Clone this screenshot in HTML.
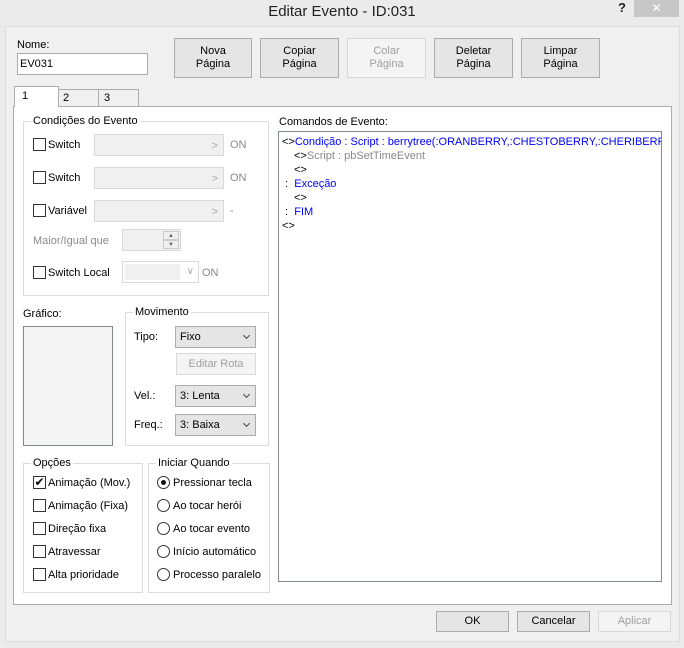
<!DOCTYPE html>
<html><head><meta charset="utf-8"><style>
*{box-sizing:border-box;margin:0;padding:0}
body{width:684px;height:648px;background:#ebebeb;font-family:"Liberation Sans",sans-serif;font-size:11px;line-height:16px;color:#000;position:relative;overflow:hidden}
.a{position:absolute;white-space:nowrap}
.btn{position:absolute;background:#e5e5e5;border:1px solid #acacac;text-align:center;font-size:11px;line-height:13px;display:flex;align-items:center;justify-content:center}
.dis{background:#f4f4f4;border-color:#d9d9d9;color:#a0a0a0}
.grp{position:absolute;border:1px solid #dcdcdc}
.gl{position:absolute;top:-8px;left:7px;background:#fff;padding:0 2px;line-height:14px}
.cb{position:absolute;width:13px;height:13px;border:1px solid #333;background:#fff}
.rd{position:absolute;width:13px;height:13px;border:1px solid #333;border-radius:50%;background:#fff}
.fld{position:absolute;background:#f0f0f0;border:1px solid #d9d9d9}
.cmb{position:absolute;background:#e5e5e5;border:1px solid #acacac;padding-left:4px;line-height:21px}
.cmb:after{content:"";position:absolute;right:6px;top:6px;width:4px;height:4px;border-right:1.5px solid #444;border-bottom:1.5px solid #444;transform:rotate(45deg)}
.gray{color:#8a8a8a}
</style></head><body>
<div class="a" style="left:0;top:4px;width:684px;text-align:center;font-size:15px;color:#222">Editar Evento - ID:031</div>
<div class="a" style="left:618px;top:0px;font-size:13px;font-weight:bold;color:#222">?</div>
<div class="a" style="left:634px;top:0;width:45px;height:17px;background:#c7c7c7;color:#fff;text-align:center;font-size:12px;line-height:17px">✕</div>
<div class="a" style="left:5px;top:26px;width:675px;height:616px;background:#f0f0f0;border:1px solid #dcdcdc"></div>
<div class="a" style="left:17px;top:37px">Nome:</div>
<div class="a" style="left:17px;top:53px;width:131px;height:22px;background:#fff;border:1px solid #acacac;padding:3px 2px;line-height:15px">EV031</div>
<div class="btn" style="left:174px;top:38px;width:78px;height:40px">Nova<br>Página</div>
<div class="btn" style="left:260px;top:38px;width:79px;height:40px">Copiar<br>Página</div>
<div class="btn dis" style="left:347px;top:38px;width:79px;height:40px">Colar<br>Página</div>
<div class="btn" style="left:434px;top:38px;width:79px;height:40px">Deletar<br>Página</div>
<div class="btn" style="left:521px;top:38px;width:79px;height:40px">Limpar<br>Página</div>
<div class="a" style="left:13px;top:106px;width:659px;height:499px;background:#fff;border:1px solid #acacac"></div>
<div class="a" style="left:58px;top:89px;width:41px;height:18px;background:#f0f0f0;border:1px solid #acacac;padding-left:4px;line-height:17px">2</div>
<div class="a" style="left:98px;top:89px;width:41px;height:18px;background:#f0f0f0;border:1px solid #acacac;padding-left:5px;line-height:17px">3</div>
<div class="a" style="left:14px;top:86px;width:45px;height:21px;background:#fff;border:1px solid #acacac;border-bottom:none;padding-left:7px;line-height:18px">1</div>

<div class="grp" style="left:23px;top:121px;width:246px;height:175px"><div class="gl">Condições do Evento</div></div>
<div class="cb" style="left:33px;top:138px"></div><div class="a" style="left:48px;top:137px">Switch</div>
<div class="fld" style="left:94px;top:134px;width:130px;height:22px"><span class="a" style="right:5px;top:3px;color:#aaa">&gt;</span></div><div class="a gray" style="left:230px;top:137px">ON</div>
<div class="cb" style="left:33px;top:171px"></div><div class="a" style="left:48px;top:170px">Switch</div>
<div class="fld" style="left:94px;top:167px;width:130px;height:22px"><span class="a" style="right:5px;top:3px;color:#aaa">&gt;</span></div><div class="a gray" style="left:230px;top:170px">ON</div>
<div class="cb" style="left:33px;top:204px"></div><div class="a" style="left:48px;top:203px">Variável</div>
<div class="fld" style="left:94px;top:200px;width:130px;height:22px"><span class="a" style="right:5px;top:3px;color:#aaa">&gt;</span></div><div class="a gray" style="left:230px;top:203px">-</div>
<div class="a gray" style="left:33px;top:233px">Maior/Igual que</div>
<div class="fld" style="left:122px;top:229px;width:59px;height:22px"><span class="a" style="right:1px;top:1px;width:16px;height:9px;border:1px solid #ccc;font-size:6px;text-align:center;color:#666;line-height:8px">▲</span><span class="a" style="right:1px;top:10px;width:16px;height:9px;border:1px solid #ccc;font-size:6px;text-align:center;color:#666;line-height:8px">▼</span></div>
<div class="cb" style="left:33px;top:266px"></div><div class="a" style="left:48px;top:265px">Switch Local</div>
<div class="fld" style="left:122px;top:261px;width:77px;height:22px;background:#fff"><span class="a" style="left:2px;top:2px;width:55px;height:16px;background:#f0f0f0"></span><span class="a" style="right:4px;top:2px;color:#aaa;font-size:10px">∨</span></div><div class="a gray" style="left:202px;top:265px">ON</div>

<div class="a" style="left:279px;top:114px">Comandos de Evento:</div>
<div class="a" style="left:278px;top:131px;width:384px;height:451px;background:#fff;border:1px solid #828790;overflow:hidden;line-height:14px;padding-top:3px;padding-left:3px">
<div style="color:#0000ff"><span style="color:#000">&lt;&gt;</span>Condição : Script : berrytree(:ORANBERRY,:CHESTOBERRY,:CHERIBERRY</div>
<div style="padding-left:12px;color:#888"><span style="color:#000">&lt;&gt;</span>Script : pbSetTimeEvent</div>
<div style="padding-left:12px">&lt;&gt;</div>
<div>&nbsp;:&nbsp; <span style="color:#0000ff">Exceção</span></div>
<div style="padding-left:12px">&lt;&gt;</div>
<div>&nbsp;:&nbsp; <span style="color:#0000ff">FIM</span></div>
<div>&lt;&gt;</div>
</div>

<div class="a" style="left:23px;top:306px">Gráfico:</div>
<div class="a" style="left:23px;top:326px;width:90px;height:120px;background:#f4f4f4;border:1px solid #828790"></div>
<div class="grp" style="left:125px;top:312px;width:144px;height:134px"><div class="gl">Movimento</div></div>
<div class="a" style="left:134px;top:329px">Tipo:</div>
<div class="cmb" style="left:175px;top:326px;width:81px;height:22px">Fixo</div>
<div class="btn dis" style="left:176px;top:353px;width:80px;height:22px">Editar Rota</div>
<div class="a" style="left:134px;top:388px">Vel.:</div>
<div class="cmb" style="left:175px;top:385px;width:81px;height:22px">3: Lenta</div>
<div class="a" style="left:134px;top:417px">Freq.:</div>
<div class="cmb" style="left:175px;top:414px;width:81px;height:22px">3: Baixa</div>

<div class="grp" style="left:23px;top:463px;width:120px;height:130px"><div class="gl">Opções</div></div>
<div class="cb" style="left:33px;top:476px;font-size:12px;line-height:11px;text-align:center">✔</div><div class="a" style="left:48px;top:475px">Animação (Mov.)</div>
<div class="cb" style="left:33px;top:499px"></div><div class="a" style="left:48px;top:498px">Animação (Fixa)</div>
<div class="cb" style="left:33px;top:522px"></div><div class="a" style="left:48px;top:521px">Direção fixa</div>
<div class="cb" style="left:33px;top:545px"></div><div class="a" style="left:48px;top:544px">Atravessar</div>
<div class="cb" style="left:33px;top:568px"></div><div class="a" style="left:48px;top:567px">Alta prioridade</div>

<div class="grp" style="left:148px;top:463px;width:122px;height:130px"><div class="gl">Iniciar Quando</div></div>
<div class="rd" style="left:157px;top:476px"><span class="a" style="left:3px;top:3px;width:5px;height:5px;border-radius:50%;background:#111"></span></div><div class="a" style="left:173px;top:475px">Pressionar tecla</div>
<div class="rd" style="left:157px;top:499px"></div><div class="a" style="left:173px;top:498px">Ao tocar herói</div>
<div class="rd" style="left:157px;top:522px"></div><div class="a" style="left:173px;top:521px">Ao tocar evento</div>
<div class="rd" style="left:157px;top:545px"></div><div class="a" style="left:173px;top:544px">Início automático</div>
<div class="rd" style="left:157px;top:568px"></div><div class="a" style="left:173px;top:567px">Processo paralelo</div>

<div class="btn" style="left:436px;top:611px;width:73px;height:21px">OK</div>
<div class="btn" style="left:517px;top:611px;width:73px;height:21px">Cancelar</div>
<div class="btn dis" style="left:598px;top:611px;width:73px;height:21px">Aplicar</div>
</body></html>
